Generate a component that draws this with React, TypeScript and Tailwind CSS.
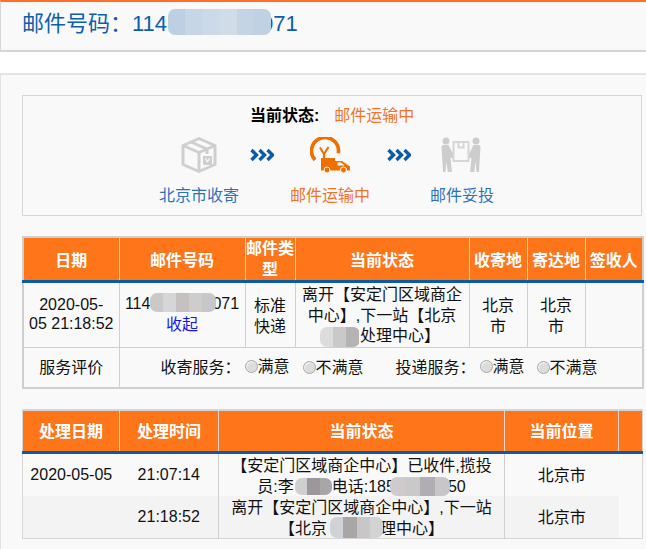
const CJK = "font-['Liberation_Sans','Noto_Sans_CJK_SC',sans-serif]";

function Smudge({ className, cells }: { className: string; cells: string[] }) {
  return (
    <span className={`absolute flex overflow-hidden rounded-[7px] ${className}`}>
      {cells.map((c, i) => (
        <span key={i} className="flex-1" style={{ background: c }} />
      ))}
    </span>
  );
}

function Chevrons() {
  return (
    <svg width="24" height="14" viewBox="0 0 24 14">
      <g fill="none" stroke="#0b5ca8" strokeWidth="3.4">
        <path d="M1.500 2l5 5-5 5" />
        <path d="M9.500 2l5 5-5 5" />
        <path d="M17.500 2l5 5-5 5" />
      </g>
    </svg>
  );
}

function BoxIcon() {
  return (
    <svg width="38" height="38" viewBox="0 0 38 38">
      <g fill="none" stroke="#cfcfcf" strokeWidth="3" strokeLinejoin="round">
        <path d="M19 2.500 35 9.500v19L19 35.500 3 28.500v-19z" />
        <path d="M3 9.500 19 16.500l16-7M19 16.500v19" />
        <path d="M11 6l16 7v5" />
      </g>
      <rect x="23" y="20" width="9" height="9" fill="#cfcfcf" />
      <path d="M25.500 22.500l2 3 2-3" fill="none" stroke="#fafafa" strokeWidth="1.300" />
    </svg>
  );
}

function TruckIcon() {
  return (
    <svg width="41" height="36" viewBox="0 0 41 36">
      <path d="M5 23A13.500 13.500 0 1 1 28.300 16.300" fill="none" stroke="#ef7000" strokeWidth="3.600" />
      <path d="M10 10.500l4 6.500 4.500-7M14 17v4" fill="none" stroke="#ef7000" strokeWidth="2.200" />
      <path d="M11 21h14v3h7l8 5.500v4H11z" fill="#ef7000" />
      <path d="M27.500 25.500h3.500l3.500 3h-7z" fill="#fafafa" />
      <circle cx="17" cy="33" r="3" fill="#ef7000" stroke="#fafafa" />
      <circle cx="33.500" cy="33" r="3" fill="#ef7000" stroke="#fafafa" />
    </svg>
  );
}

function HandoverIcon() {
  return (
    <svg width="42" height="36" viewBox="0 0 42 36">
      <g fill="#cdcdcd">
        <circle cx="5" cy="4" r="3.500" />
        <circle cx="35" cy="4" r="3.500" />
        <path d="M0.500 10q0-2 2-2h5l5 10v3H9.500L11 35H6.800L5.500 25 4.500 35H2z" />
        <path d="M39.500 10q0-2-2-2h-5l-5 10v3h3L29 35h4.200l1.300-10 1 10H38z" />
      </g>
      <path d="M12.500 5h15v19h-15zM17.500 5v5.500h5V5" fill="none" stroke="#d6d6d6" strokeWidth="2" />
    </svg>
  );
}

function Step({ icon, label, tone }: { icon: React.ReactNode; label: string; tone: string }) {
  return (
    <div className="flex w-[80px] flex-col items-center">
      <div className="flex h-[38px] items-center">{icon}</div>
      <span className={`mt-[10px] whitespace-nowrap text-[16px] leading-[24px] ${tone}`}>{label}</span>
    </div>
  );
}

function Radio({ label }: { label: string }) {
  return (
    <span className="inline-flex items-center whitespace-nowrap">
      <span className="h-[13px] w-[13px] rounded-full border border-[#a9a9a9] bg-[#dcdcdc] shadow-[inset_1px_1px_1px_#f4f4f4]" />
      {label}
    </span>
  );
}

const thBase = "border-l border-[#e2d6cb] bg-[#ff751a] p-0 text-center text-[16px] font-bold leading-[21px] text-white first:border-l-0";
const th = `${thBase} pt-[2px]`;
const td = "border-l border-[#cfcfcf] p-0 text-center align-middle first:border-l-0";

export default function App() {
  return (
    <div className={`h-[549px] w-[646px] overflow-hidden bg-white text-[16px] text-[#111] ${CJK}`}>
      <div className="h-[52px] border-t-2 border-b-2 border-l border-t-[#ff6f26] border-b-[#d6d6d6] border-l-[#d6d6d6] bg-[#f9f9f9] pl-[21px] pt-[7px]">
        <div className="relative text-[22px] leading-[30px] text-[#0d5fae]">
          邮件号码：114<span className="pl-[94px]">071</span>
          <Smudge
            className="left-[146px] top-0 h-[26px] w-[103px]"
            cells={["#bdd0e3", "#c6d6e6", "#cbd9e8", "#d0dde9", "#c4d4e5", "#c0d1e4"]}
          />
        </div>
      </div>

      <div className="mt-[21px] h-[476px] border-t-2 border-l border-[#e3e3e3] bg-[#f9f9f9] pl-[21px] pt-[20px]">
        <div className="h-[121px] w-[620px] border border-[#d6d6d6] pt-[8px]">
          <div className="flex h-[24px] items-center pl-[227px] leading-[24px]">
            <b className="font-bold text-black">当前状态:</b>
            <span className="ml-[15px] text-[#f0742a]">邮件运输中</span>
          </div>
          <div className="mt-[8px] flex pl-[136px]">
            <Step icon={<BoxIcon />} label="北京市收寄" tone="text-[#2a72bd]" />
            <div className="w-[51px] pl-[11px] pt-[12px]"><Chevrons /></div>
            <Step icon={<TruckIcon />} label="邮件运输中" tone="text-[#f0742a]" />
            <div className="w-[52px] pl-[17px] pt-[12px]"><Chevrons /></div>
            <Step icon={<HandoverIcon />} label="邮件妥投" tone="text-[#2a72bd]" />
          </div>
        </div>

        <table className="mt-[20px] w-[620px] table-fixed border-collapse border-2 border-[#cfcfcf]">
          <colgroup>
            <col className="w-[96px]" />
            <col className="w-[126px]" />
            <col className="w-[50px]" />
            <col className="w-[174px]" />
            <col className="w-[58px]" />
            <col className="w-[58px]" />
            <col className="w-[58px]" />
          </colgroup>
          <thead>
            <tr className="h-[44px] border-b-[3px] border-[#0b5ca8]">
              <th className={th}>日期</th>
              <th className={th}>邮件号码</th>
              <th className={thBase}>邮件类型</th>
              <th className={th}>当前状态</th>
              <th className={th}>收寄地</th>
              <th className={th}>寄达地</th>
              <th className={th}>签收人</th>
            </tr>
          </thead>
          <tbody className="leading-[21px]">
            <tr className="h-[64px] border-b border-[#cfcfcf]">
              <td className={`${td} pb-[2px] leading-[19px]`}>2020-05-<br />05 21:18:52</td>
              <td className={`${td} pt-[2px]`}>
                <div className="pb-[4px]">
                  <div className="relative whitespace-nowrap">
                    114<span className="pl-[62px]">071</span>
                    <Smudge
                      className="left-[30px] top-0 h-[19px] w-[66px]"
                      cells={["#c9c9c9", "#d6d6d6", "#c5c1c1", "#cfcccc", "#c7c7c7"]}
                    />
                  </div>
                  <a className="text-[#1515e8]">收起</a>
                </div>
              </td>
              <td className={`${td} px-[8px] pt-[2px]`}>标准快递</td>
              <td className={`${td} px-[6px] pt-[2px] leading-[20.500px]`}>
                <div className="relative">
                  离开【安定门区域商企<br />
                  中心】,下一站【北京<br />
                  <span className="pl-[36px]">处理中心】</span>
                  <Smudge
                    className="left-[18px] top-[42px] h-[20px] w-[40px]"
                    cells={["#dcdcdc", "#c9c9c9", "#b5b3b3"]}
                  />
                </div>
              </td>
              <td className={`${td} px-[12px] pt-[2px]`}>北京市</td>
              <td className={`${td} px-[12px] pt-[2px]`}>北京市</td>
              <td className={td}></td>
            </tr>
            <tr className="h-[41px]">
              <td className={td}>服务评价</td>
              <td colSpan={6} className={`${td} text-left`}>
                <div className="flex items-center">
                  <span className="ml-[41px] whitespace-nowrap">收寄服务：</span>
                  <span className="ml-[4px] w-[58px]"><Radio label="满意" /></span>
                  <Radio label="不满意" />
                  <span className="ml-[32px] whitespace-nowrap">投递服务：</span>
                  <span className="ml-[4px] w-[57px]"><Radio label="满意" /></span>
                  <Radio label="不满意" />
                </div>
              </td>
            </tr>
          </tbody>
        </table>

        <table className="mt-[20px] w-[620px] table-fixed border-collapse border border-t-2 border-[#d6d6d6]">
          <colgroup>
            <col className="w-[97px]" />
            <col className="w-[99px]" />
            <col className="w-[286px]" />
            <col className="w-[114px]" />
            <col className="w-[24px]" />
          </colgroup>
          <thead>
            <tr className="h-[42px] border-b-[3px] border-[#0b5ca8]">
              <th className={th}>处理日期</th>
              <th className={th}>处理时间</th>
              <th className={th}>当前状态</th>
              <th className={th}>当前位置</th>
              <th className={th}></th>
            </tr>
          </thead>
          <tbody className="leading-[21px]">
            <tr className="h-[42px]">
              <td className="p-0 text-center">2020-05-05</td>
              <td className="p-0 text-center">21:07:14</td>
              <td className={`${td} px-[8px]`}>
                <div className="relative -mb-px pt-px">
                  【安定门区域商企中心】已收件,揽投<br />
                  员:李<span className="pl-[38px]">电话:185</span><span className="pl-[53px]">50</span>
                  <Smudge
                    className="left-[68px] top-[24px] h-[17px] w-[37px]"
                    cells={["#cfcfcf", "#9b979b", "#a9a6a8"]}
                  />
                  <Smudge
                    className="left-[163px] top-[23px] h-[19px] w-[60px]"
                    cells={["#cfcace", "#c9c9c9", "#b0adb3", "#c8c6c8"]}
                  />
                </div>
              </td>
              <td className={`${td} pt-px`}>北京市</td>
              <td className="p-0"></td>
            </tr>
            <tr className="h-[42px]">
              <td className="bg-[#f3f3f3] p-0"></td>
              <td className="bg-[#f3f3f3] p-0 text-center">21:18:52</td>
              <td className={`${td} bg-[#f3f3f3] px-[8px]`}>
                <div className="relative -mb-px pt-px">
                  离开【安定门区域商企中心】,下一站<br />
                  【北京<span className="pl-[53px]">理中心】</span>
                  <Smudge
                    className="left-[103px] top-[21px] h-[21px] w-[53px]"
                    cells={["#d0d3d6", "#a9a6a8", "#c8c6c8", "#d3d3d3"]}
                  />
                </div>
              </td>
              <td className={`${td} bg-[#f3f3f3] pt-px`}>北京市</td>
              <td className="p-0"></td>
            </tr>
          </tbody>
        </table>
      </div>
    </div>
  );
}
